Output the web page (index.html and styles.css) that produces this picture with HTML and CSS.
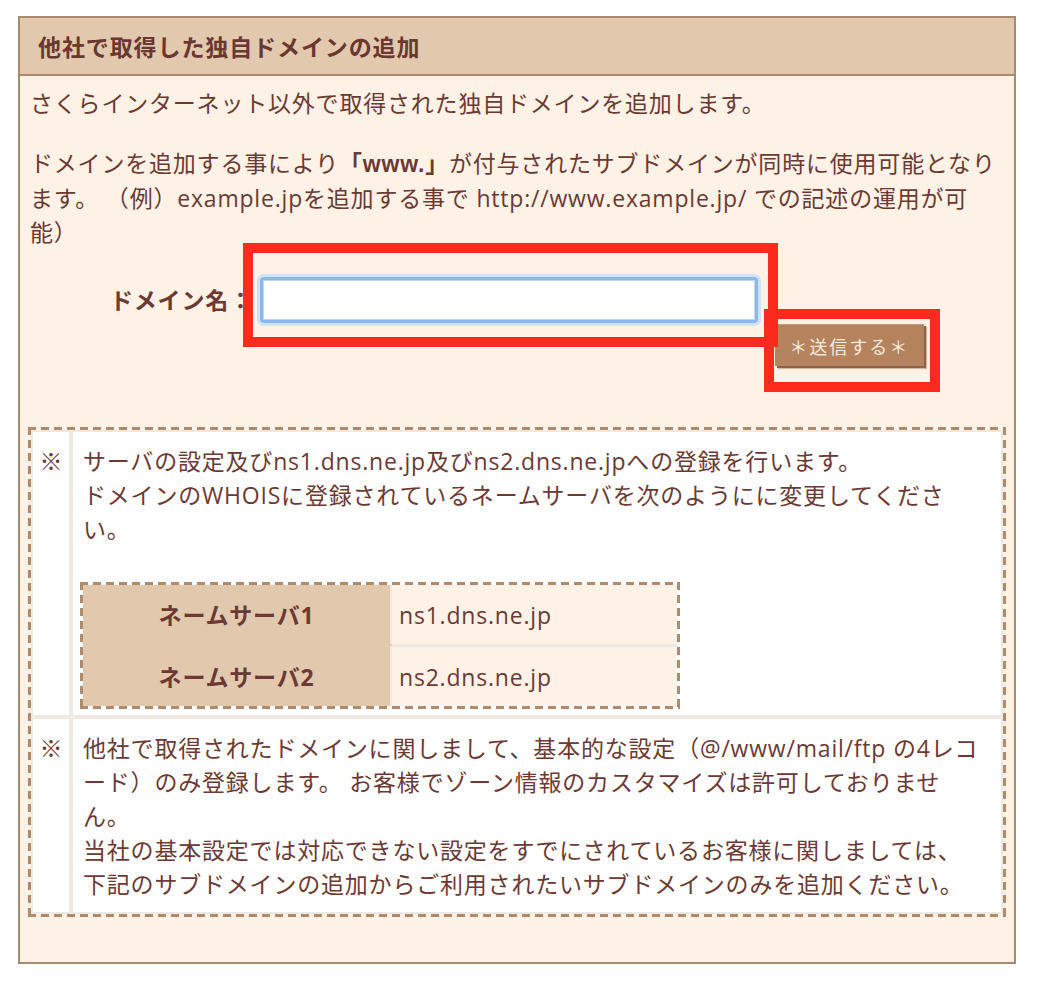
FILE: index.html
```html
<!DOCTYPE html>
<html lang="ja">
<head>
<meta charset="utf-8">
<title>他社で取得した独自ドメインの追加</title>
<link rel="stylesheet" href="styles.css">
</head>
<body>
<div class="panel">
  <div class="panel-head">他社で取得した独自ドメインの追加</div>
  <div class="panel-body">
    <p class="lead">さくらインターネット以外で取得された独自ドメインを追加します。</p>
    <p class="lead">ドメインを追加する事により<strong class="www">「www.」</strong>が付与されたサブドメインが同時に使用可能となり<br>ます。 （例）example.jpを追加する事で http://www.example.jp/ での記述の運用が可<br>能）</p>
    <form class="form-row" onsubmit="return false">
      <label class="form-label" for="domain">ドメイン名：</label>
      <input class="form-input" id="domain" type="text" autofocus>
      <button class="form-btn" type="submit">＊送信する＊</button>
    </form>
    <div class="notes dashed">
      <div class="notes-grid">
        <div class="mark">※</div>
        <div class="note note-first">
          <div class="note-text">サーバの設定及びns1.dns.ne.jp及びns2.dns.ne.jpへの登録を行います。<br>ドメインのWHOISに登録されているネームサーバを次のようにに変更してくださ<br>い。</div>
          <div class="ns-wrap dashed">
            <table class="ns-table">
              <tr><th>ネームサーバ1</th><td>ns1.dns.ne.jp</td></tr>
              <tr><th>ネームサーバ2</th><td>ns2.dns.ne.jp</td></tr>
            </table>
          </div>
        </div>
        <div class="mark">※</div>
        <div class="note note-second">他社で取得されたドメインに関しまして、基本的な設定（@/www/mail/ftp の4レコ<br>ード）のみ登録します。 お客様でゾーン情報のカスタマイズは許可しておりませ<br>ん。<br>当社の基本設定では対応できない設定をすでにされているお客様に関しましては、<br>下記のサブドメインの追加からご利用されたいサブドメインのみを追加ください。</div>
      </div>
    </div>
  </div>
</div>
<div class="mark-box mark-box-input"></div>
<div class="mark-box mark-box-btn"></div>
</body>
</html>
```
FILE: styles.css
```css
html, body {
  margin: 0;
  padding: 0;
  background: #ffffff;
}
body {
  font-family: "Open Sans", "Noto Sans CJK JP", sans-serif;
  font-size: 23px;
  letter-spacing: 0.8px;
  color: #6b3a34;
}
.panel {
  margin: 16px 0 0 18px;
  width: 998px;
  box-sizing: border-box;
  border: 2px solid #a98a6e;
  background: #fef1e5;
}
.panel-head {
  height: 56px;
  background: #e2c8ad;
  border-bottom: 2px solid #a98a6e;
  padding-left: 18px;
  display: flex;
  align-items: center;
  font-weight: bold;
  letter-spacing: 0.9px;
  color: #6a3731;
}
.panel-body {
  padding: 10px 8px 45px;
}
.lead {
  margin: 0;
  padding-left: 2px;
  line-height: 34px;
  white-space: nowrap;
}
.lead + .lead {
  margin-top: 26px;
}
.www {
  font-family: "Liberation Sans", "Noto Sans CJK JP", sans-serif;
}
.form-row {
  display: flex;
  align-items: flex-start;
  margin: 28px 0 0;
  padding-left: 82px;
}
.form-label {
  height: 46px;
  line-height: 46px;
  font-weight: bold;
  white-space: nowrap;
}
.form-input {
  margin: 0 0 0 7px;
  width: 498px;
  height: 46px;
  box-sizing: border-box;
  border: 3px solid #8cb8ec;
  border-radius: 4px;
  background: #ffffff;
  box-shadow: 0 0 0 3px #cfe2f6, inset 0 0 0 1px #bcd7f4;
  outline: none;
  font: inherit;
  padding: 0 6px;
}
.form-btn {
  margin: 47px 0 0 17px;
  width: 149px;
  height: 42px;
  padding: 0;
  border: none;
  border-top: 1px solid #c79a76;
  background: #b5845f;
  box-shadow: 2px 2px 0 #8a634a, 3px 3px 1px rgba(120, 90, 70, 0.35);
  color: #f8ebde;
  font-family: "Noto Sans CJK JP", sans-serif;
  font-size: 18px;
  letter-spacing: 2px;
  line-height: 40px;
  cursor: pointer;
}
.dashed {
  padding: 3px;
  background:
    repeating-linear-gradient(to right, #b08b6b 0 8px, transparent 8px 13px) top left / 100% 3px no-repeat,
    repeating-linear-gradient(to right, #b08b6b 0 8px, transparent 8px 13px) bottom left / 100% 3px no-repeat,
    repeating-linear-gradient(to bottom, #b08b6b 0 8px, transparent 8px 13px) top left / 3px 100% no-repeat,
    repeating-linear-gradient(to bottom, #b08b6b 0 8px, transparent 8px 13px) top right / 3px 100% no-repeat;
}
.notes {
  margin-top: 61px;
}
.notes-grid {
  display: grid;
  grid-template-columns: 36px 1fr;
  gap: 4px;
  padding: 2px;
  background: #efe9e4;
}
.mark {
  background: #ffffff;
  text-align: center;
  padding-top: 12px;
  line-height: 34px;
  letter-spacing: 0;
}
.note {
  background: #ffffff;
  line-height: 34px;
  white-space: nowrap;
}
.note-first {
  padding: 12px 10px 6px;
}
.note-second {
  padding: 12px 10px 11px;
}
.ns-wrap {
  margin: 36px 0 0 -3px;
  width: 594px;
}
.ns-table {
  width: 100%;
  border-collapse: separate;
  border-spacing: 0;
}
.ns-table th {
  width: 307px;
  height: 59px;
  padding: 0;
  background: #e2c8ad;
  border-right: 2px solid #efe9e4;
  font-weight: bold;
  text-align: center;
}
.ns-table td {
  height: 59px;
  padding: 0 0 0 7px;
  background: #fef1e5;
}
.ns-table tr + tr th {
  border-top: 3px solid #e2c8ad;
}
.ns-table tr + tr td {
  border-top: 3px solid #efe9e4;
}
.mark-box {
  position: absolute;
  box-sizing: border-box;
  border: 10px solid #fe2a1e;
  pointer-events: none;
}
.mark-box-input {
  left: 243px;
  top: 243px;
  width: 535px;
  height: 104px;
}
.mark-box-btn {
  left: 764px;
  top: 309px;
  width: 176px;
  height: 83px;
}
```
